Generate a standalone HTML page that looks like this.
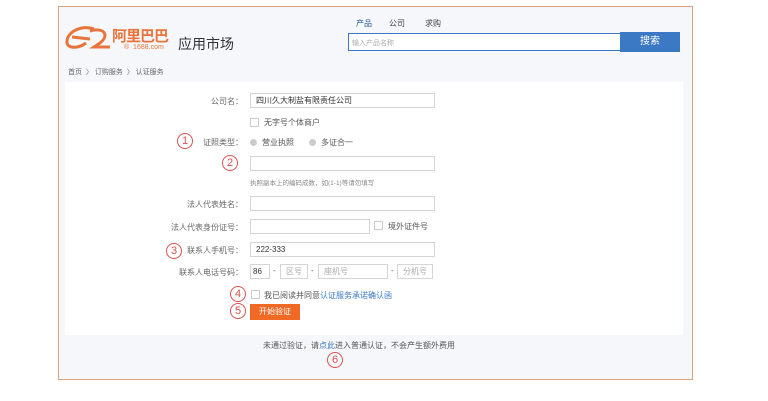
<!DOCTYPE html>
<html><head><meta charset="utf-8"><style>
*{margin:0;padding:0;box-sizing:border-box}
body{width:768px;height:401px;background:#fff;position:relative;overflow:hidden;font-family:"Liberation Sans","Noto Sans CJK SC",sans-serif;color:#444}
.a{position:absolute;white-space:nowrap}
.frame{position:absolute;left:58px;top:6px;width:635px;height:374px;border:1.5px solid #d8a27c;background:#f5f7fa}
.panel{position:absolute;left:65px;top:82px;width:618px;height:253px;background:#fff}
.lab{position:absolute;font-size:8px;color:#666;text-align:right;width:120px;left:123px}
.inp{position:absolute;height:15px;border:1px solid #d5d5d5;background:#fff;font-size:8px;padding-left:5px;line-height:13px;color:#333}
.cb{position:absolute;width:9px;height:9px;border:1px solid #ccc;background:#fff}
.rd{position:absolute;width:7px;height:7px;border-radius:50%;background:#ccc}
.num{position:absolute;width:16px;height:16px;border:1px solid #d9534f;border-radius:50%;color:#d9534f;font-size:11px;line-height:14px;text-align:center}
.t8{font-size:8px;color:#555}
</style></head><body>
<div class="frame"></div>
<div class="panel"></div>
<svg class="a" style="left:64px;top:25px" width="50" height="26" viewBox="0 0 50 26"><path d="M30 4 C18 0 4 6 3 16 C2 24 14 24 22 18 M8 12 L26 14 M26 6 C40 2 46 10 36 18 L30 22 L46 22" fill="none" stroke="#e8743b" stroke-width="3"/></svg>
<div class="a" style="left:112px;top:25px;font-size:15px;color:#e8743b;font-weight:bold;letter-spacing:-1px">阿里巴巴</div>
<div class="a" style="left:124px;top:44px;font-size:7px;color:#e8743b">® &nbsp;1688.com</div>
<div class="a" style="left:178px;top:34px;font-size:14px;color:#333">应用市场</div>
<div class="a" style="left:356px;top:18px;font-size:8px;color:#2a5fa0">产品</div>
<div class="a" style="left:389px;top:18px;font-size:8px;color:#444">公司</div>
<div class="a" style="left:425px;top:18px;font-size:8px;color:#444">求购</div>
<div class="a" style="left:348px;top:33px;width:273px;height:18px;border:1.5px solid #3a78c3;background:#fff;font-size:7px;color:#aaa;padding:4px 3px">输入产品名称</div>
<div class="a" style="left:620px;top:32px;width:60px;height:20px;background:#3b79c4;color:#fff;font-size:10px;text-align:center;line-height:20px">搜索</div>
<div class="a" style="left:68px;top:67px;font-size:7px;color:#666">首页 &nbsp;〉 订购服务 &nbsp;〉 认证服务</div>
<div class="lab" style="top:96px">公司名：</div>
<div class="inp" style="left:250px;top:93px;width:185px">四川久大制盐有限责任公司</div>
<div class="cb" style="left:250px;top:118px"></div><div class="a t8" style="left:264px;top:117px">无字号个体商户</div>
<div class="num" style="left:177px;top:133px">1</div>
<div class="lab" style="top:137px">证照类型：</div>
<div class="rd" style="left:250px;top:139px"></div><div class="a t8" style="left:262px;top:137px">营业执照</div>
<div class="rd" style="left:309px;top:139px"></div><div class="a t8" style="left:321px;top:137px">多证合一</div>
<div class="num" style="left:222px;top:155px">2</div>
<div class="inp" style="left:250px;top:156px;width:185px"></div>
<div class="a" style="left:250px;top:177px;font-size:6.5px;color:#888">执照副本上的编码成数，如(1-1)等请勿填写</div>
<div class="lab" style="top:199px">法人代表姓名：</div>
<div class="inp" style="left:250px;top:196px;width:185px"></div>
<div class="lab" style="top:222px">法人代表身份证号：</div>
<div class="inp" style="left:250px;top:219px;width:120px"></div>
<div class="cb" style="left:374px;top:221px"></div><div class="a t8" style="left:388px;top:221px">境外证件号</div>
<div class="num" style="left:166px;top:243px">3</div>
<div class="lab" style="top:245px">联系人手机号：</div>
<div class="inp" style="left:250px;top:242px;width:185px">222-333</div>
<div class="lab" style="top:267px">联系人电话号码：</div>
<div class="inp" style="left:250px;top:264px;width:20px;padding-left:2px">86</div>
<div class="a t8" style="left:273px;top:266px">-</div>
<div class="inp" style="left:280px;top:264px;width:28px;color:#aaa">区号</div>
<div class="a t8" style="left:311px;top:266px">-</div>
<div class="inp" style="left:318px;top:264px;width:70px;color:#aaa">座机号</div>
<div class="a t8" style="left:391px;top:266px">-</div>
<div class="inp" style="left:397px;top:264px;width:36px;color:#aaa">分机号</div>
<div class="num" style="left:230px;top:286px">4</div>
<div class="cb" style="left:251px;top:290px"></div>
<div class="a t8" style="left:264px;top:290px">我已阅读并同意<span style="color:#3a78c3">认证服务承诺确认函</span></div>
<div class="num" style="left:230px;top:303px">5</div>
<div class="a" style="left:250px;top:304px;width:50px;height:16px;background:#f06a26;color:#fff;font-size:8px;text-align:center;line-height:16px">开始验证</div>
<div class="a t8" style="left:263px;top:340px">未通过验证，请<span style="color:#3a78c3">点此</span>进入普通认证，不会产生额外费用</div>
<div class="num" style="left:327px;top:352px">6</div>
</body></html>
